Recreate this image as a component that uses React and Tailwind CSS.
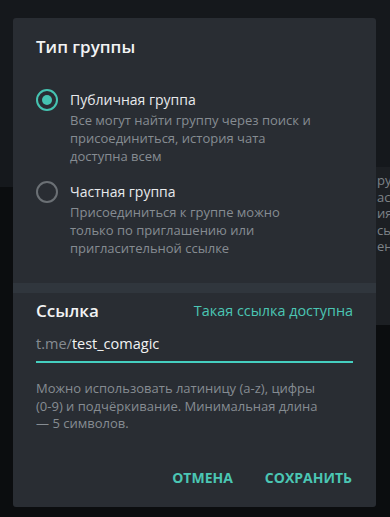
import React, { useState } from 'react';

const teal = 'text-[#4bc6b4]';

function Radio({ checked }) {
  return (
    <span
      className={`mt-[-1px] flex h-[22px] w-[22px] shrink-0 items-center justify-center rounded-full border-2 ${
        checked ? 'border-[#45c3b1]' : 'border-[#6b7075]'
      }`}
    >
      {checked && <span className="h-[10px] w-[10px] rounded-full bg-[#45c3b1]" />}
    </span>
  );
}

function Option({ checked, label, children, onClick }) {
  return (
    <div className="flex cursor-pointer gap-[12px]" onClick={onClick}>
      <Radio checked={checked} />
      <div>
        <div className="text-[14px] leading-[20px] text-[#e8eaec]">{label}</div>
        <div className="mt-[1px] text-[13px] leading-[18px] text-[#868c92]">{children}</div>
      </div>
    </div>
  );
}

export default function App() {
  const [type, setType] = useState('public');
  const [link, setLink] = useState('test_comagic');

  return (
    <div
      className="relative h-[517px] w-[390px] overflow-hidden bg-[#0b0d0f]"
      style={{ fontFamily: '"Open Sans", "Noto Sans", sans-serif' }}
    >
      {/* страница за затемнением */}
      <div className="h-[167px] bg-[#15181c]" />
      <div className="flex">
        <div className="flex-1">
          <div className="h-[20px] bg-[#15181c]" />
        </div>
        <div className="flex h-[158px] w-[25px] flex-col overflow-hidden bg-[#1c1f23] pt-[5px] pl-[12px] text-[13px] leading-[16.5px] text-[#7d8287] whitespace-nowrap">
          <span>ру</span>
          <span>ас</span>
          <span>ия</span>
          <span>сь</span>
          <span>ен</span>
        </div>
      </div>

      {/* модальное окно */}
      <div className="absolute left-[13px] top-[18px] flex h-[489px] w-[363px] flex-col rounded-[3px] bg-[#292d33]">
        <div className="px-[23px] pt-[18px]">
          <h2 className="text-[17px] font-semibold leading-[22px] text-[#f2f3f4]">Тип группы</h2>

          <div className="mt-[32px] flex flex-col gap-[17px]">
            <Option checked={type === 'public'} label="Публичная группа" onClick={() => setType('public')}>
              Все могут найти группу через поиск и<br />
              присоединиться, история чата<br />
              доступна всем
            </Option>
            <Option checked={type === 'private'} label="Частная группа" onClick={() => setType('private')}>
              Присоединиться к группе можно<br />
              только по приглашению или<br />
              пригласительной ссылке
            </Option>
          </div>
        </div>

        <div className="mt-[26px] h-[10px] bg-[#30363d]" />

        <div className="px-[23px] pt-[7px]">
          <div className="flex items-center justify-between">
            <span className="text-[17px] font-semibold leading-[22px] text-[#f2f3f4]">Ссылка</span>
            <span className={`text-[14.4px] leading-[22px] ${teal}`}>Такая ссылка доступна</span>
          </div>

          <div className="mt-[12px] flex items-center border-b-2 border-[#45cfc0] pb-[7px] text-[14.5px] leading-[20px]">
            <span className="text-[#868c92]">t.me/</span>
            <input
              value={link}
              onChange={(e) => setLink(e.target.value)}
              className="w-full bg-transparent p-0 text-[#f2f3f4] outline-none caret-white"
              style={{ fontFamily: 'inherit' }}
            />
          </div>

          <p className="mt-[17px] text-[13px] leading-[17.5px] text-[#868c92]">
            Можно использовать латиницу (a-z), цифры<br />
            (0-9) и подчёркивание. Минимальная длина<br />
            — 5 символов.
          </p>
        </div>

        <div className="mt-auto mb-[14px] flex justify-end gap-[8px] pr-[12px]">
          <button className={`px-[12px] py-[5px] text-[14px] font-bold leading-[20px] ${teal}`}>ОТМЕНА</button>
          <button className={`px-[12px] py-[5px] text-[14px] font-bold leading-[20px] ${teal}`}>СОХРАНИТЬ</button>
        </div>
      </div>
    </div>
  );
}
